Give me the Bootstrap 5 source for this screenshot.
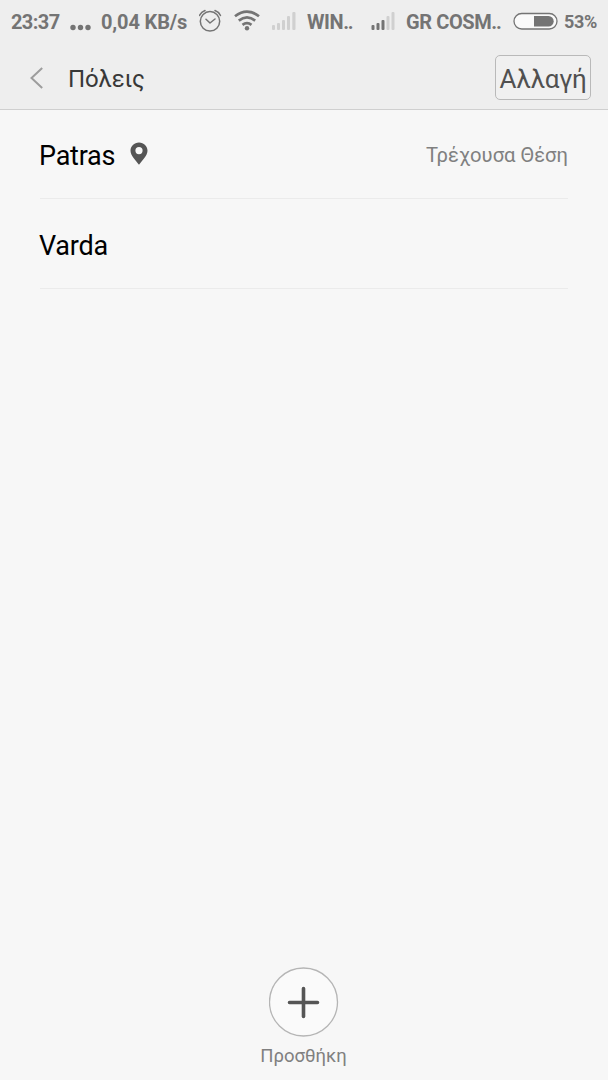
<!DOCTYPE html>
<html lang="el">
<head>
<meta charset="utf-8">
<meta name="viewport" content="width=device-width, initial-scale=1">
<title>Πόλεις</title>
<link href="https://cdn.jsdelivr.net/npm/bootstrap@5.3.0/dist/css/bootstrap.min.css" rel="stylesheet">
<style>
body{font-family:Roboto,"Noto Sans",sans-serif;background:#f7f7f7;color:#000;line-height:1}
.top-area{background:#eee;border-bottom:1px solid #cfcfcf;height:110px}
.status-bar{display:grid;grid-template-columns:59px 31px 98px 35px 38px 35px 64px 35px 107px 51px 1fr;height:44px;padding-left:11px;font-size:20px;font-weight:700;color:#747474;align-items:center;white-space:nowrap}
.status-bar svg{display:block}
.clock{letter-spacing:-.6px}
.speed{letter-spacing:-.15px}
.carrier{letter-spacing:-.4px}
.carrier-dots{letter-spacing:-1.2px}
.battery-label{font-size:18px;letter-spacing:-.3px}
.title-bar{height:65px;padding:11px 17px 9px 30px}
.page-title{font-size:24px;letter-spacing:-.15px;color:#383838;font-weight:400;margin-left:25px;padding-top:3px}
.edit-btn{width:96px;height:45px;padding:2px 0 0;border:1px solid #b9b9b9;border-radius:5px;font-size:26px;letter-spacing:-.3px;line-height:1;color:#505050;background:#f0f0f0}
.city-list{padding:0 40px}
.city-list .list-group-item.city-row{background:none;border:0;border-bottom:1px solid #ebebeb;border-radius:0;padding:3px 0 0;height:89px;color:#000}
.city-list .list-group-item.city-row + .city-row{height:90px}
.city-name{font-size:27px;letter-spacing:-.25px;margin-left:-1px;padding-top:2px}
.pin{margin:-3px 0 0 15px}
.city-note{font-size:20.2px;color:#808080}
.add-area{padding:0 1px 15px 0}
.add-btn{width:70px;height:70px;padding:0;border:0}
.add-label{font-size:18.5px;color:#808080;margin-top:10px}
</style>
</head>
<body class="d-flex flex-column vh-100 overflow-hidden">
<header class="top-area flex-shrink-0">
  <div class="status-bar">
    <span class="clock">23:37</span>
    <svg width="22" height="44" fill="#747474"><circle cx="3" cy="27.5" r="2.7"/><circle cx="10.5" cy="27.5" r="2.7"/><circle cx="18" cy="27.5" r="2.7"/></svg>
    <span class="speed">0,04 KB/s</span>
    <svg width="24" height="44" fill="none" stroke="#747474" stroke-width="1.5" stroke-linecap="round" stroke-linejoin="round"><circle cx="11" cy="21.3" r="9.7"/><path d="M7 19.3l4 3.7 5-4M.5 15.500Q2.200 11.800 6 10.500M21.500 15.500Q19.800 11.800 16 10.500"/></svg>
    <svg width="28" height="44" fill="none" stroke="#747474" stroke-width="2.7"><path d="M1 16.200Q13 6.900 25 16.200M4.800 20.600Q13 14.200 21.200 20.600M8.500 24.800Q13 21.400 17.500 24.800"/><circle cx="13" cy="28.2" r="2.2" fill="#747474" stroke="none"/></svg>
    <svg width="24" height="44" fill="#d0d0d0"><rect y="25" width="3" height="5" rx="1"/><rect x="5" y="23" width="3" height="7" rx="1"/><rect x="10" y="20" width="3" height="10" rx="1"/><rect x="15" y="16" width="3" height="14" rx="1"/><rect x="20.300" y="12" width="3.200" height="18" rx="1"/></svg>
    <span class="carrier">WIN<span class="carrier-dots">..</span></span>
    <svg width="24" height="44" fill="#747474"><rect x=".5" y="25" width="3" height="5" rx="1"/><rect x="5.500" y="23" width="3" height="7" rx="1"/><rect x="10.500" y="20" width="3" height="10" rx="1"/><rect x="15.500" y="16" width="3" height="14" rx="1" fill="#d0d0d0"/><rect x="20.500" y="12" width="3" height="18" rx="1" fill="#d0d0d0"/></svg>
    <span class="carrier">GR COSM<span class="carrier-dots">..</span></span>
    <svg width="46" height="44"><rect x="1" y="13.500" width="43" height="15.500" rx="7.750" fill="#fafafa" stroke="#747474" stroke-width="1.300"/><path d="M21 16h14.500a5.200 5.200 0 0 1 0 10.400H21z" fill="#747474"/></svg>
    <span class="battery-label">53%</span>
  </div>
  <div class="title-bar d-flex align-items-center">
    <svg width="13" height="24" fill="none" stroke="#9d9d9d" stroke-width="2"><path d="M12.200 2L1.500 12l10.700 10"/></svg>
    <h1 class="page-title mb-0">Πόλεις</h1>
    <button type="button" class="btn edit-btn ms-auto">Αλλαγή</button>
  </div>
</header>
<main class="list-group list-group-flush city-list flex-grow-1">
  <div class="list-group-item city-row d-flex align-items-center">
    <span class="city-name">Patras</span>
    <svg class="pin" width="18" height="24" viewBox="0 0 18 24"><path fill="#555" fill-rule="evenodd" d="M9 .5C4.100.5.500 4.200.500 8.800.500 13.500 6 19 9 22.700 12 19 17.500 13.500 17.500 8.800 17.500 4.200 13.900.500 9 .500M9 5a3.600 3.600 0 1 0 0 7.200A3.600 3.600 0 0 0 9 5"/></svg>
    <span class="city-note ms-auto">Τρέχουσα Θέση</span>
  </div>
  <div class="list-group-item city-row d-flex align-items-center"><span class="city-name">Varda</span></div>
</main>
<footer class="add-area d-flex flex-column align-items-center">
  <button type="button" class="btn add-btn" aria-label="Προσθήκη"><svg class="d-block" width="70" height="70"><circle cx="34.5" cy="35" r="34" fill="#fafafa" stroke="#b5b5b5" stroke-width="1.300"/><path d="M34.500 21.500v28M20.500 35.500h28" stroke="#555" stroke-width="3.600" stroke-linecap="round"/></svg></button>
  <span class="add-label">Προσθήκη</span>
</footer>
<script src="https://cdn.jsdelivr.net/npm/bootstrap@5.3.0/dist/js/bootstrap.bundle.min.js"></script>
</body>
</html>
